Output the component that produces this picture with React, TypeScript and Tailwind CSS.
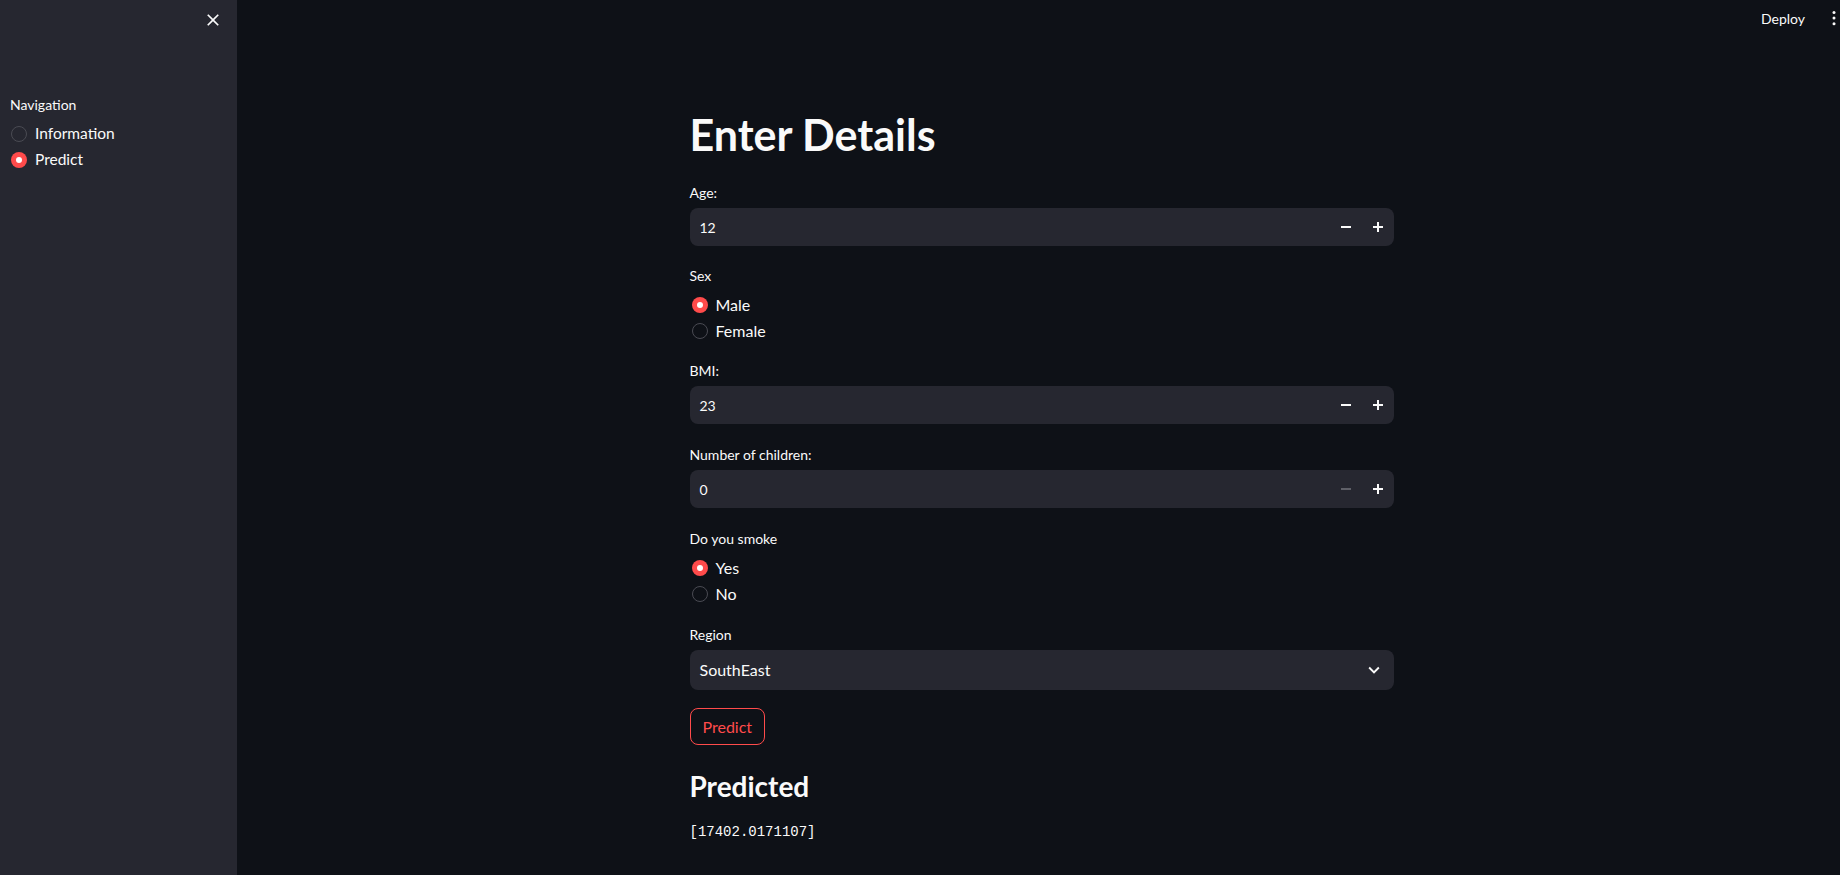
import React from "react";

function Dot({ on }: { on: boolean }) {
  if (on) {
    return (
      <span className="flex h-4 w-4 shrink-0 items-center justify-center rounded-full bg-[#ff4b4b]">
        <span className="h-1.5 w-1.5 rounded-full bg-white" />
      </span>
    );
  }
  return <span className="h-4 w-4 shrink-0 rounded-full border border-[#4a4b53]" />;
}

function Radio({ options, value, size = "text-[16px]" }: { options: string[]; value: string; size?: string }) {
  return (
    <div className="flex flex-col pt-[5px]">
      {options.map((o) => (
        <div key={o} className={"flex h-[26px] items-center gap-2 pl-[2px] " + size}>
          <Dot on={o === value} />
          <span>{o}</span>
        </div>
      ))}
    </div>
  );
}

function Label({ children }: { children: React.ReactNode }) {
  return <div className="flex h-6 items-center text-[14px]">{children}</div>;
}

function Minus({ dim }: { dim?: boolean }) {
  return (
    <svg width="10" height="10" viewBox="0 0 10 10">
      <path d="M0 5h10" stroke={dim ? "#5f6068" : "#fafafa"} strokeWidth="2" />
    </svg>
  );
}

function Plus() {
  return (
    <svg width="10" height="10" viewBox="0 0 10 10">
      <path d="M0 5h10M5 0v10" stroke="#fafafa" strokeWidth="2" />
    </svg>
  );
}

function NumberInput({ label, value, minDisabled, className }: { label: string; value: string; minDisabled?: boolean; className?: string }) {
  return (
    <div className={className}>
      <Label>{label}</Label>
      <div className="mt-1 flex h-[38px] items-center rounded-lg bg-[#262730]">
        <span className="flex-1 pl-[10px] text-[14px]">{value}</span>
        <button className="flex h-full w-8 items-center justify-center">
          <Minus dim={minDisabled} />
        </button>
        <button className="flex h-full w-8 items-center justify-center">
          <Plus />
        </button>
      </div>
    </div>
  );
}

export default function App() {
  return (
    <div className="flex h-[875px] w-full overflow-hidden bg-[#0e1117] font-['Lato',sans-serif] text-[#fafafa]">
      {/* Sidebar */}
      <aside className="flex w-[237px] shrink-0 flex-col bg-[#262730] px-[10px]">
        <div className="flex h-10 items-center justify-end pr-1">
          <svg width="20" height="20" viewBox="0 0 24 24" fill="#fafafa">
            <path d="M19 6.41 17.59 5 12 10.59 6.41 5 5 6.41 10.59 12 5 17.59 6.41 19 12 13.41 17.59 19 19 17.59 13.41 12z" />
          </svg>
        </div>
        <div className="mt-[52px]">
          <Label>Navigation</Label>
          <div className="-ml-[1px]">
            <Radio options={["Information", "Predict"]} value="Predict" size="text-[15.5px]" />
          </div>
        </div>
      </aside>

      {/* Main */}
      <main className="flex flex-1 flex-col pl-[6px]">
        <header className="-mr-[3px] flex h-[36px] items-center justify-end gap-[20px] text-[14px]">
          <span>Deploy</span>
          <svg width="18" height="18" viewBox="0 0 24 24" fill="#fafafa">
            <circle cx="12" cy="4.5" r="2" />
            <circle cx="12" cy="12" r="2" />
            <circle cx="12" cy="19.5" r="2" />
          </svg>
        </header>

        <div className="mx-auto flex w-[704px] flex-col pt-[73px]">
          <h1 className="text-[43px] font-bold leading-[52px]">Enter Details</h1>

          <NumberInput className="mt-[19px]" label="Age:" value="12" />

          <div className="mt-[17px]">
            <Label>Sex</Label>
            <Radio options={["Male", "Female"]} value="Male" />
          </div>

          <NumberInput className="mt-[14px]" label="BMI:" value="23" />
          <NumberInput className="mt-[18px]" label="Number of children:" value="0" minDisabled />

          <div className="mt-[18px]">
            <Label>Do you smoke</Label>
            <Radio options={["Yes", "No"]} value="Yes" />
          </div>

          <div className="mt-[15px]">
            <Label>Region</Label>
            <div className="mt-1 flex h-10 items-center justify-between rounded-lg bg-[#262730] pl-[10px] pr-[9px] text-[16px]">
              <span>SouthEast</span>
              <svg width="22" height="22" viewBox="0 0 24 24" fill="#fafafa">
                <path d="M16.59 8.59 12 13.17 7.41 8.59 6 10l6 6 6-6z" />
              </svg>
            </div>
          </div>

          <div className="mt-[18px]">
            <button className="flex h-[37px] items-center rounded-lg border border-[#ff4b4b] px-3 text-[16px] text-[#ff4b4b]">
              Predict
            </button>
          </div>

          <h3 className="mt-6 text-[28px] font-bold leading-[34px]">Predicted</h3>

          <div className="mt-[19px] font-['Liberation_Mono',monospace] text-[14px] leading-5">[17402.0171107]</div>
        </div>
      </main>
    </div>
  );
}
